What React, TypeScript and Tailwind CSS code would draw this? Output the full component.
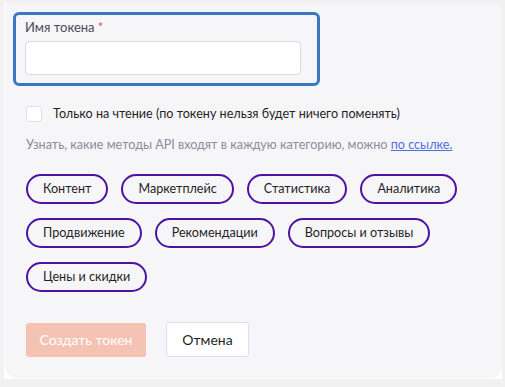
import React from "react";

const chips = [
  ["Контент", "Маркетплейс", "Статистика", "Аналитика"],
  ["Продвижение", "Рекомендации", "Вопросы и отзывы"],
  ["Цены и скидки"],
];

export default function App() {
  return (
    <div
      className="w-[505px] h-[387px] bg-[#f0f1f0] pt-[3px] pl-[4px]"
      style={{ fontFamily: "Lato, 'Open Sans', sans-serif" }}
    >
      <div className="w-[498px] h-[376px] bg-white pl-[1px] pb-[1px] rounded-tr-[10px]">
        <div className="w-[497px] h-[375px] bg-[#f6f6f8] rounded-tr-[10px] rounded-b-[12px] pt-[9px] pl-[8px]">
          <div className="w-[307px] h-[74px] border-[3px] border-[#3a78c0] rounded-[6px] pt-[3px] pl-[9px]">
            <div className="text-[13px] leading-[18px] text-[#4b4b57]">
              Имя токена <span className="text-[#f0506e]">*</span>
            </div>
            <div className="mt-[5px] w-[276px] h-[34px] bg-white border border-[#d9d9de] rounded-[4px]" />
          </div>
          <div className="pl-[13px]">
            <div className="flex items-center mt-[20px] h-[16px]">
              <div className="w-[16px] h-[16px] bg-white border border-[#e2e2e6] rounded-[3px]" />
              <span className="ml-[11px] text-[12.6px] text-[#1f1f25]">
                Только на чтение (по токену нельзя будет ничего поменять)
              </span>
            </div>
            <div className="mt-[14px] text-[12.6px] leading-[18px] text-[#8c8c99]">
              Узнать, какие методы API входят в каждую категорию, можно{" "}
              <span className="text-[#4f6fe0] underline">по ссылке.</span>
            </div>
            <div className="mt-[20px] flex flex-col gap-[14px]">
              {chips.map((row, i) => (
                <div key={i} className="flex gap-[13px]">
                  {row.map((c) => (
                    <div
                      key={c}
                      className="h-[30px] px-[15px] flex items-center border-2 border-[#4d12a3] rounded-full text-[12.6px] text-[#1f1f25]"
                    >
                      {c}
                    </div>
                  ))}
                </div>
              ))}
            </div>
            <div className="mt-[30px] flex items-center gap-[20px]">
              <div className="w-[120px] h-[34px] bg-[#f5c3b3] rounded-[3px] flex items-center justify-center text-white text-[14px]">
                Создать токен
              </div>
              <div className="w-[83px] h-[35px] bg-white border border-[#dfdfe5] rounded-[3px] flex items-center justify-center text-[#1f1f25] text-[14px]">
                Отмена
              </div>
            </div>
          </div>
        </div>
      </div>
    </div>
  );
}
